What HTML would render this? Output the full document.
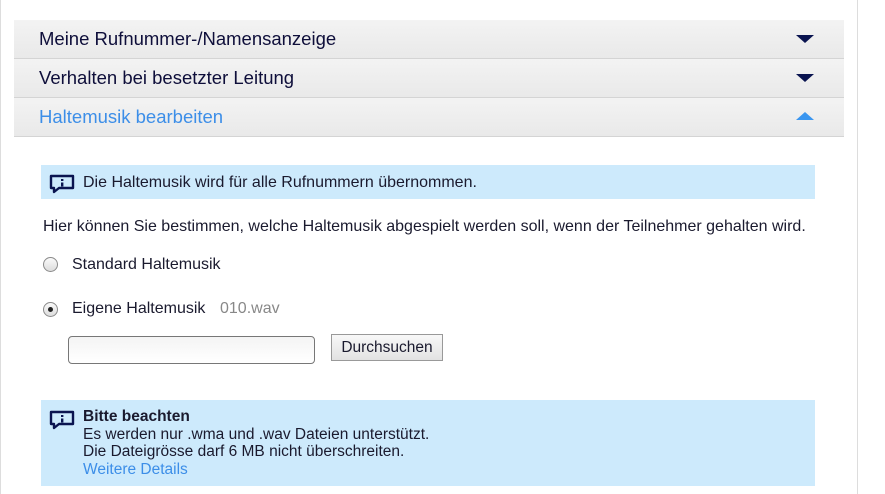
<!DOCTYPE html>
<html><head><style>
body{margin:0;width:885px;height:494px;background:#fff;position:relative;overflow:hidden;font-family:"Liberation Sans",sans-serif;color:#1a1a2e}
.lb{position:absolute;left:0;top:0;width:1px;height:494px;background:#ddd}
.rb{position:absolute;left:857px;top:0;width:1px;height:494px;background:#ddd}
.h{position:absolute;left:14px;width:830px;height:38px;background:linear-gradient(#f3f3f3,#e9e9e9);border-bottom:1px solid #d4d4d4;font-size:18.5px;line-height:38px;color:#0e0e3a}
.h span{position:absolute;left:25px;top:0px}
.tri{position:absolute;left:782px;top:15px;width:0;height:0;border-left:9px solid transparent;border-right:9px solid transparent}
.dn{border-top:8px solid #0a1450}
.up{border-bottom:8px solid #3a96f0}
.info{position:absolute;left:41px;width:774px;background:#cdeafc;color:#1a1a2e}
.ic{position:absolute;left:8px}
.t{position:absolute;font-size:16px}
.radio{position:absolute;left:43px;width:15px;height:15px;border-radius:50%;border:1px solid #8a8a8a;background:linear-gradient(#fafafa,#dcdcdc);box-sizing:border-box}
</style></head><body>
<div class="lb"></div><div class="rb"></div>
<div class="h" style="top:20px"><span>Meine Rufnummer-/Namensanzeige</span><div class="tri dn"></div></div>
<div class="h" style="top:59px"><span>Verhalten bei besetzter Leitung</span><div class="tri dn"></div></div>
<div class="h" style="top:98px"><span style="color:#3c8ee8">Haltemusik bearbeiten</span><div class="tri up" style="top:14px"></div></div>
<div class="info" style="top:165px;height:34px">
<svg class="ic" style="top:9px" width="26" height="20" viewBox="0 0 26 20"><path d="M2 2h22v12H10l-5 4v-4H2z" fill="none" stroke="#0a1450" stroke-width="2.4" stroke-linejoin="round"/><rect x="12" y="5" width="2.4" height="2" fill="#0a1450"/><rect x="12" y="8.5" width="2.4" height="4" fill="#0a1450"/></svg>
<div class="t" style="left:42px;top:9px">Die Haltemusik wird für alle Rufnummern übernommen.</div></div>
<div class="t" style="left:43px;top:218px">Hier können Sie bestimmen, welche Haltemusik abgespielt werden soll, wenn der Teilnehmer gehalten wird.</div>
<div class="radio" style="top:257px"></div>
<div class="t" style="left:72px;top:256px">Standard Haltemusik</div>
<div class="radio" style="top:302px"><div style="position:absolute;left:4px;top:4px;width:5px;height:5px;border-radius:50%;background:#222"></div></div>
<div class="t" style="left:72px;top:300px">Eigene Haltemusik</div>
<div class="t" style="left:220px;top:300px;color:#888">010.wav</div>
<div style="position:absolute;left:68px;top:336px;width:247px;height:28px;box-sizing:border-box;border:1px solid #777;border-radius:4px;background:linear-gradient(#f4f4f4,#fff)"></div>
<div style="position:absolute;left:331px;top:334px;width:112px;height:27px;box-sizing:border-box;border:1px solid #999;background:linear-gradient(#f8f8f8,#e2e2e2);font-size:15.5px;line-height:26px;text-align:center">Durchsuchen</div>
<div class="info" style="top:400px;height:86px">
<svg class="ic" style="top:10px" width="26" height="20" viewBox="0 0 26 20"><path d="M2 2h22v12H10l-5 4v-4H2z" fill="none" stroke="#0a1450" stroke-width="2.4" stroke-linejoin="round"/><rect x="12" y="5" width="2.4" height="2" fill="#0a1450"/><rect x="12" y="8.5" width="2.4" height="4" fill="#0a1450"/></svg>
<div class="t" style="left:42px;top:8px;line-height:17.5px;font-size:15.5px"><b>Bitte beachten</b><br>Es werden nur .wma und .wav Dateien unterstützt.<br>Die Dateigrösse darf 6 MB nicht überschreiten.<br><span style="color:#3c8ee8">Weitere Details</span></div></div>
</body></html>
